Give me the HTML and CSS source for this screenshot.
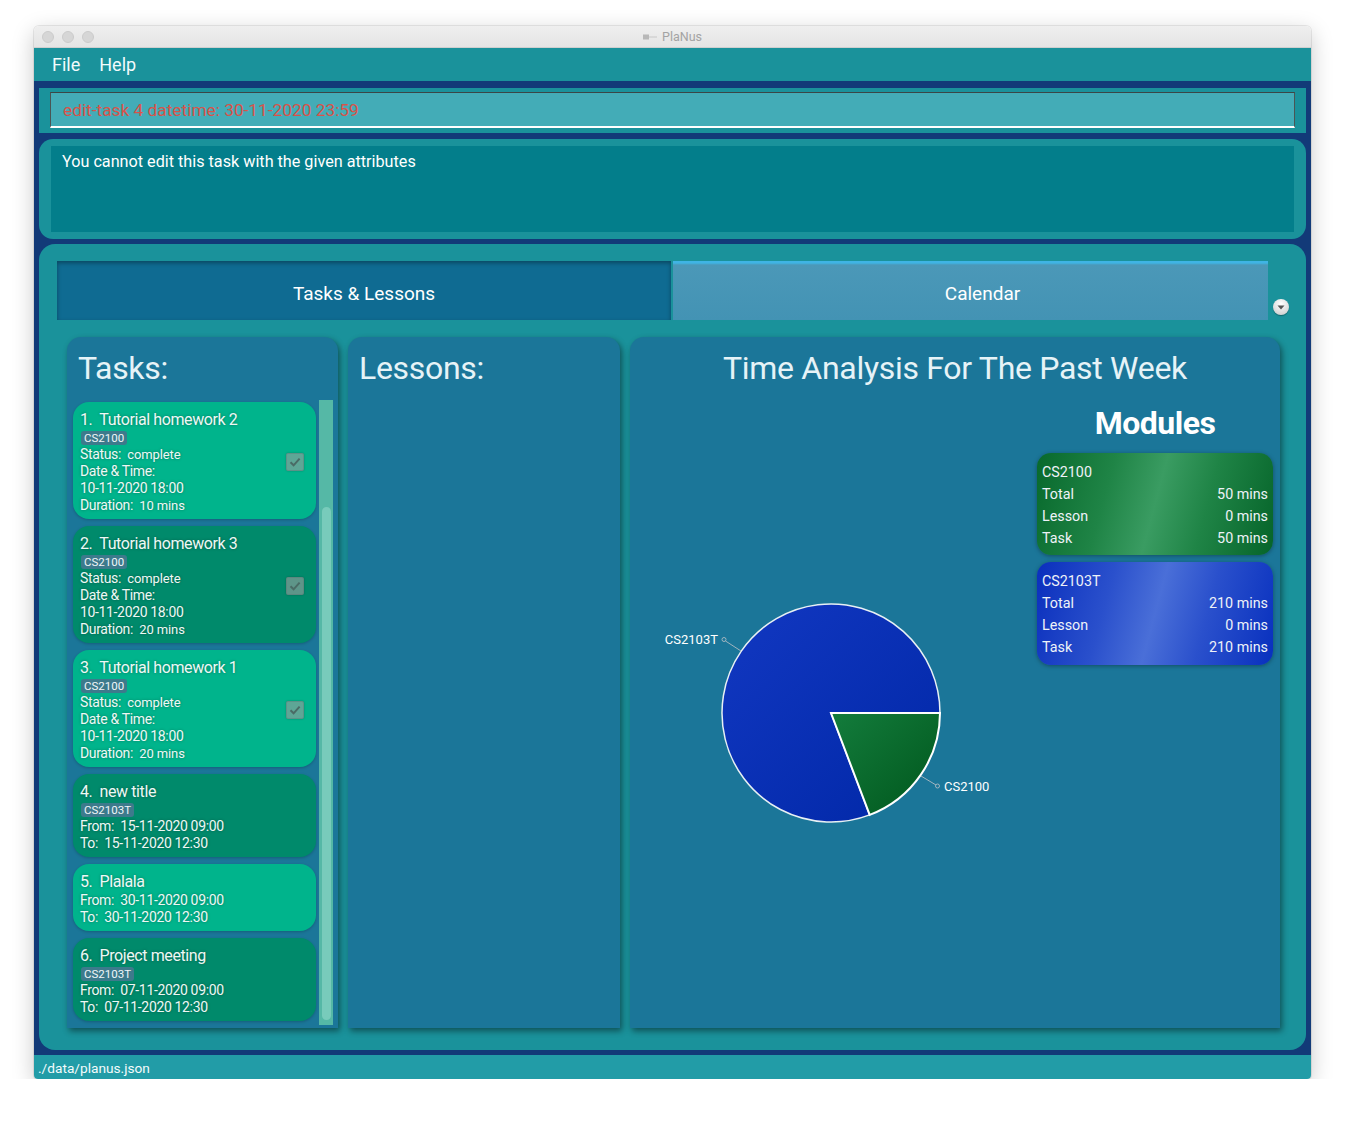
FILE: index.html
```html
<!DOCTYPE html>
<html>
<head>
<meta charset="utf-8">
<title>PlaNus</title>
<link rel="stylesheet" href="styles.css">
</head>
<body>
<div class="window">
  <div class="titlebar">
    <div class="lights"><span></span><span></span><span></span></div>
    <div class="wintitle">
      <svg class="appicon" width="14" height="6" viewBox="0 0 14 6"><rect x="0" y="0.5" width="6" height="5" fill="#b8b8b8"/><rect x="6" y="2.5" width="8" height="1" fill="#c8c8c8"/></svg>
      <span>PlaNus</span>
    </div>
  </div>
  <div class="menubar"><span class="menu-item">File</span><span class="menu-item">Help</span></div>
  <div class="frame">
    <div class="cmdbox"><div class="cmdfield">edit-task 4 datetime: 30-11-2020 23:59</div></div>
    <div class="result"><div class="result-inner">You cannot edit this task with the given attributes</div></div>
    <div class="mainpanel">
      <div class="tabbar">
        <div class="tab tab-active">Tasks &amp; Lessons</div>
        <div class="tab tab-inactive">Calendar</div>
        <div class="tabmenu"><svg width="16" height="16" viewBox="0 0 16 16"><path d="M4.5 6.5 L11.5 6.5 L8 10.5 Z" fill="#555"/></svg></div>
      </div>
      <div class="content">
        <div class="panel panel-tasks">
          <div class="panel-title">Tasks:</div>
          <div class="listwrap">
            <div class="cards">
              <div class="card card-light">
                <div class="card-main">
                  <div class="card-title">1.&nbsp; Tutorial homework 2</div>
                  <span class="tag">CS2100</span>
                  <div class="line">Status:&nbsp; <span class="val">complete</span></div>
                  <div class="line">Date &amp; Time:</div>
                  <div class="line">10-11-2020 18:00</div>
                  <div class="line">Duration:&nbsp; <span class="val">10 mins</span></div>
                </div>
                <div class="check"><svg width="18" height="18" viewBox="0 0 18 18"><path d="M4.5 9.2 L7.6 12.3 L13.6 5.6" fill="none" stroke="#4a6b65" stroke-width="2"/></svg></div>
              </div>
              <div class="card card-dark">
                <div class="card-main">
                  <div class="card-title">2.&nbsp; Tutorial homework 3</div>
                  <span class="tag">CS2100</span>
                  <div class="line">Status:&nbsp; <span class="val">complete</span></div>
                  <div class="line">Date &amp; Time:</div>
                  <div class="line">10-11-2020 18:00</div>
                  <div class="line">Duration:&nbsp; <span class="val">20 mins</span></div>
                </div>
                <div class="check"><svg width="18" height="18" viewBox="0 0 18 18"><path d="M4.5 9.2 L7.6 12.3 L13.6 5.6" fill="none" stroke="#4a6b65" stroke-width="2"/></svg></div>
              </div>
              <div class="card card-light">
                <div class="card-main">
                  <div class="card-title">3.&nbsp; Tutorial homework 1</div>
                  <span class="tag">CS2100</span>
                  <div class="line">Status:&nbsp; <span class="val">complete</span></div>
                  <div class="line">Date &amp; Time:</div>
                  <div class="line">10-11-2020 18:00</div>
                  <div class="line">Duration:&nbsp; <span class="val">20 mins</span></div>
                </div>
                <div class="check"><svg width="18" height="18" viewBox="0 0 18 18"><path d="M4.5 9.2 L7.6 12.3 L13.6 5.6" fill="none" stroke="#4a6b65" stroke-width="2"/></svg></div>
              </div>
              <div class="card card-dark">
                <div class="card-main">
                  <div class="card-title">4.&nbsp; new title</div>
                  <span class="tag">CS2103T</span>
                  <div class="line">From:&nbsp; 15-11-2020 09:00</div>
                  <div class="line">To:&nbsp; 15-11-2020 12:30</div>
                </div>
              </div>
              <div class="card card-light">
                <div class="card-main">
                  <div class="card-title">5.&nbsp; Plalala</div>
                  <div class="line">From:&nbsp; 30-11-2020 09:00</div>
                  <div class="line">To:&nbsp; 30-11-2020 12:30</div>
                </div>
              </div>
              <div class="card card-dark">
                <div class="card-main">
                  <div class="card-title">6.&nbsp; Project meeting</div>
                  <span class="tag">CS2103T</span>
                  <div class="line">From:&nbsp; 07-11-2020 09:00</div>
                  <div class="line">To:&nbsp; 07-11-2020 12:30</div>
                </div>
              </div>
            </div>
            <div class="scrollbar"><div class="thumb"></div></div>
          </div>
        </div>
        <div class="panel panel-lessons">
          <div class="panel-title">Lessons:</div>
        </div>
        <div class="panel panel-analysis">
          <div class="panel-title centered">Time Analysis For The Past Week</div>
          <div class="analysis-body">
            <div class="chart">
              <svg width="407" height="620" viewBox="0 0 407 620">
                <defs>
                  <linearGradient id="gBlue" x1="0" y1="0" x2="1" y2="1">
                    <stop offset="0" stop-color="#1238c2"/>
                    <stop offset="1" stop-color="#0027a6"/>
                  </linearGradient>
                  <linearGradient id="gGreen" x1="0" y1="0" x2="1" y2="1">
                    <stop offset="0" stop-color="#137c3c"/>
                    <stop offset="1" stop-color="#00561c"/>
                  </linearGradient>
                </defs>
                <path d="M201 313 L239.7 414.9 A109 109 0 1 1 310 313 Z" fill="url(#gBlue)" stroke="#e8f0f4" stroke-width="1.5"/>
                <path d="M201 313 L310 313 A109 109 0 0 1 239.7 414.9 Z" fill="url(#gGreen)" stroke="#ffffff" stroke-width="2"/>
                <line x1="95.5" y1="241" x2="111" y2="251" stroke="#9fb4bf" stroke-width="1"/>
                <circle cx="94" cy="239.5" r="2" fill="none" stroke="#9fb4bf" stroke-width="1"/>
                <text class="pie-label" x="88" y="244" text-anchor="end">CS2103T</text>
                <line x1="291" y1="376" x2="306" y2="385" stroke="#9fb4bf" stroke-width="1"/>
                <circle cx="307.5" cy="386" r="2" fill="none" stroke="#9fb4bf" stroke-width="1"/>
                <text class="pie-label" x="314" y="391">CS2100</text>
              </svg>
            </div>
            <div class="modules">
              <div class="modules-title">Modules</div>
              <div class="module module-green">
                <div class="mrow"><span>CS2100</span></div>
                <div class="mrow"><span>Total</span><span>50 mins</span></div>
                <div class="mrow"><span>Lesson</span><span>0 mins</span></div>
                <div class="mrow"><span>Task</span><span>50 mins</span></div>
              </div>
              <div class="module module-blue">
                <div class="mrow"><span>CS2103T</span></div>
                <div class="mrow"><span>Total</span><span>210 mins</span></div>
                <div class="mrow"><span>Lesson</span><span>0 mins</span></div>
                <div class="mrow"><span>Task</span><span>210 mins</span></div>
              </div>
            </div>
          </div>
        </div>
      </div>
    </div>
  </div>
  <div class="statusbar">./data/planus.json</div>
</div>
</body>
</html>
```

FILE: styles.css
```css
* { box-sizing: border-box; }
html, body { margin: 0; padding: 0; }
body {
  background: #ffffff;
  padding: 26px 34px 0 34px;
  font-family: "Roboto", "Inter", "Liberation Sans", sans-serif;
}
.window {
  width: 1277px;
  height: 1053px;
  border-radius: 5px 5px 4px 4px;
  overflow: hidden;
  box-shadow: 0 6px 22px rgba(0,0,0,0.22), 0 0 0 1px rgba(0,0,0,0.08);
  display: flex;
  flex-direction: column;
}
.titlebar {
  height: 22px;
  background: linear-gradient(#efefef, #e4e4e4);
  border-bottom: 1px solid #cfcfcf;
  display: flex;
  align-items: center;
  position: relative;
}
.lights { display: flex; gap: 8px; padding-left: 8px; }
.lights span {
  width: 12px; height: 12px; border-radius: 50%;
  background: #d6d6d6; border: 1px solid #cbcbcb;
}
.wintitle {
  position: absolute; left: 0; right: 0; top: 0; bottom: 0;
  display: flex; align-items: center; justify-content: center;
  gap: 5px;
  font-size: 12.5px; color: #a3a3a3;
  padding-left: 0;
}
.menubar {
  height: 33px;
  background: #1a929b;
  display: flex; align-items: center;
  padding-left: 18px; gap: 19px;
  font-size: 18px; color: #f2fbfc;
}
.frame {
  flex: 1;
  background: #123a78;
  padding: 7px 5px 5px 5px;
  display: flex; flex-direction: column;
}
.cmdbox {
  height: 45px;
  background: #1a929b;
  padding: 4px 11px 5px 11px;
}
.cmdfield {
  height: 36px;
  background: #43acb7;
  border-top: 1px solid #3b4646;
  border-left: 1px solid #4a5555;
  border-right: 1px solid #4a5555;
  border-bottom: 2px solid #ffffff;
  color: #d8534a;
  font-size: 17.3px;
  padding-left: 12px;
  line-height: 35px;
}
.result {
  margin-top: 6px;
  height: 100px;
  background: #1a929b;
  border-radius: 14px;
  padding: 7px 12px;
}
.result-inner {
  height: 86px;
  background: #037e8b;
  color: #ffffff;
  font-size: 16.2px;
  padding: 6px 11px;
}
.mainpanel {
  margin-top: 5px;
  flex: 1;
  background: #1a929b;
  border-radius: 16px;
  padding: 17px 16px 0 18px;
}
.tabbar {
  display: flex; align-items: stretch;
  height: 59px;
}
.tab {
  display: flex; align-items: center; justify-content: center;
  color: #ffffff; font-size: 19px;
  padding-top: 5px;
}
.tab-active {
  width: 614px;
  background: #0f6b92;
  box-shadow: inset 0 2px 4px rgba(0,0,0,0.35);
}
.tab-inactive {
  width: 595px;
  margin-left: 2px;
  padding-left: 24px;
  background: linear-gradient(#3fb4e4 0, #3fb4e4 2px, #4b98b8 4px, #4393b4 100%);
}
.tabmenu {
  margin-left: 5px;
  align-self: flex-end;
  margin-bottom: 5px;
  width: 16px; height: 16px; border-radius: 50%;
  background: radial-gradient(circle at 50% 30%, #ffffff, #d8d8d8 70%, #bdbdbd);
  box-shadow: 0 1px 1px rgba(0,0,0,0.3);
}
.tabmenu svg { display: block; }
.content {
  display: flex;
  gap: 10px;
  padding: 17px 0 0 10px;
}
.panel {
  height: 691px;
  background: #1b7699;
  border-radius: 14px 14px 0 0;
  box-shadow: 2px 3px 6px rgba(0,0,0,0.45);
}
.panel-tasks { width: 271px; }
.panel-lessons { width: 272px; }
.panel-analysis { width: 650px; }
.panel-title {
  font-size: 32px;
  line-height: 42px;
  color: #e6f3f7;
  padding: 10px 0 0 11px;
  height: 52px;
  letter-spacing: -0.3px;
}
.panel-title.centered { text-align: center; padding-left: 0; }
.listwrap {
  margin-top: 11px;
  display: flex;
  padding-left: 6px;
  height: 625px;
}
.cards {
  width: 243px;
  padding-top: 2px;
  display: flex; flex-direction: column; gap: 7px;
}
.card {
  border-radius: 16px;
  padding: 8px 7px 5px 7px;
  display: flex; align-items: center;
  color: #eef8f5;
  text-shadow: 0 0 3px rgba(0,0,0,0.35);
  box-shadow: 0 1px 3px rgba(0,0,0,0.2);
}
.card-light { background: #00b48c; }
.card-dark { background: #008a6b; }
.card-main { flex: 1; }
.card-title {
  font-size: 16px;
  line-height: 20px;
  letter-spacing: -0.4px;
}
.tag {
  display: block;
  width: fit-content;
  background: #3d7a8c;
  border-radius: 3px;
  font-size: 11.5px;
  line-height: 14px;
  padding: 0 3px;
  margin: 1px 0 1px 1px;
  color: #f0f6f8;
  text-shadow: none;
}
.line {
  font-size: 14px;
  line-height: 17px;
  letter-spacing: -0.35px;
}
.val { font-size: 13px; letter-spacing: -0.1px; }
.check {
  width: 18px; height: 18px;
  margin-right: 5px;
  border-radius: 2px;
  background: rgba(157,157,157,0.6);
  border: 1px solid rgba(90,110,110,0.35);
  box-shadow: 0 0 2px rgba(0,0,0,0.25);
}
.check svg { display: block; margin: -1px; }
.scrollbar {
  margin-left: 3px;
  width: 14px;
  height: 625px;
  background: #55b8a6;
  padding: 107px 2px 5px 3px;
}
.thumb {
  height: 100%;
  background: #78cbbb;
  border-radius: 5px;
}
.analysis-body { display: flex; }
.chart { width: 407px; height: 620px; margin-top: 11px; }
.chart svg { display: block; }
.pie-label { font-size: 13px; fill: #ffffff; font-family: "Roboto", "Inter", sans-serif; }
.modules { width: 236px; }
.modules-title {
  text-align: center;
  font-size: 32px;
  font-weight: 700;
  color: #ffffff;
  line-height: 40px;
  margin-top: 14px;
  margin-bottom: 10px;
  letter-spacing: -0.5px;
}
.module {
  height: 102px;
  border-radius: 14px;
  padding: 8px 5px 7px 5px;
  margin-bottom: 7px;
  color: #eef2f8;
  font-size: 14.3px;
  box-shadow: 0 1px 4px rgba(0,0,0,0.35);
}
.module-blue { height: 103px; }
.module-green {
  background: linear-gradient(105deg, #08692c 0%, #1f8446 30%, #3a9c62 50%, #1f8446 70%, #06642a 100%);
}
.module-blue {
  background: linear-gradient(105deg, #0a2fbd 0%, #2a50cc 30%, #4a6fd8 50%, #2a50cc 70%, #0830be 100%);
}
.mrow {
  display: flex; justify-content: space-between;
  line-height: 22px;
}
.statusbar {
  height: 24px;
  background: #229ca7;
  color: #f3fbfc;
  font-size: 13.7px;
  line-height: 26px;
  padding-left: 4px;
}
```
